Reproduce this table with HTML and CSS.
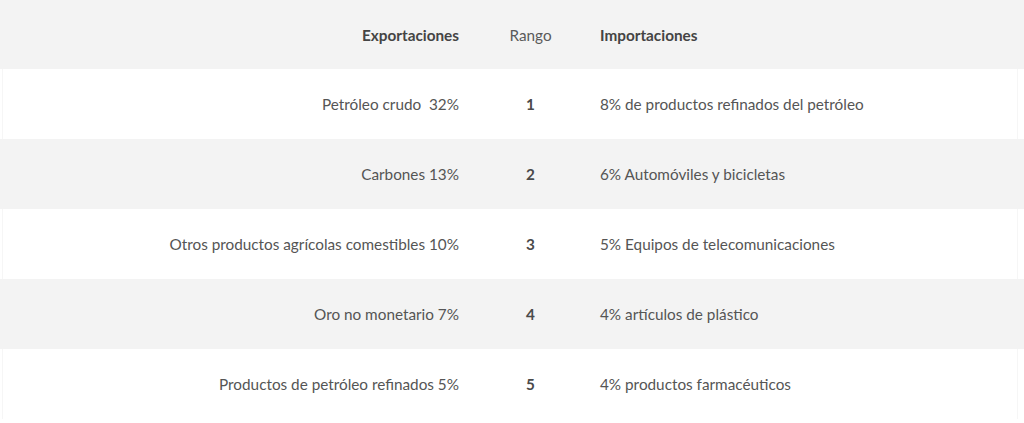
FILE: index.html
```html
<!DOCTYPE html>
<html lang="es">
<head>
<meta charset="utf-8">
<title>Comercio</title>
<link rel="stylesheet" href="styles.css">
</head>
<body>
<div class="table">
  <div class="row head">
    <div class="exp">Exportaciones</div>
    <div class="rank">Rango</div>
    <div class="imp">Importaciones</div>
  </div>
  <div class="row odd">
    <div class="exp">Petróleo crudo&nbsp; 32%</div>
    <div class="rank num">1</div>
    <div class="imp">8% de productos refinados del petróleo</div>
  </div>
  <div class="row even">
    <div class="exp">Carbones 13%</div>
    <div class="rank num">2</div>
    <div class="imp">6% Automóviles y bicicletas</div>
  </div>
  <div class="row odd">
    <div class="exp">Otros productos agrícolas comestibles 10%</div>
    <div class="rank num">3</div>
    <div class="imp">5% Equipos de telecomunicaciones</div>
  </div>
  <div class="row even">
    <div class="exp">Oro no monetario 7%</div>
    <div class="rank num">4</div>
    <div class="imp">4% artículos de plástico</div>
  </div>
  <div class="row odd">
    <div class="exp">Productos de petróleo refinados 5%</div>
    <div class="rank num">5</div>
    <div class="imp">4% productos farmacéuticos</div>
  </div>
</div>
</body>
</html>
```

FILE: styles.css
```css
html, body {
  margin: 0;
  padding: 0;
  background: #ffffff;
}
body {
  font-family: Lato, "Open Sans", Arial, sans-serif;
  font-size: 15.3px;
  color: #555555;
}
.table {
  display: flex;
  flex-direction: column;
  width: 1024px;
}
.row {
  display: grid;
  grid-template-columns: 475px 111px 1fr;
  align-items: center;
  height: 70px;
}
.row.head {
  height: 69px;
  background: #f3f3f3;
  color: #444444;
}
.row.even {
  background: #f3f3f3;
}
.row.odd {
  background:
    linear-gradient(#f6f6f6, #f6f6f6) 2px 0 / 1px 100% no-repeat,
    linear-gradient(#f6f6f6, #f6f6f6) 1017px 0 / 1px 100% no-repeat,
    #ffffff;
}
.exp {
  text-align: right;
  padding-right: 16px;
}
.rank {
  text-align: center;
}
.imp {
  padding-left: 14px;
}
.head .exp, .head .imp {
  font-weight: 700;
}
.head .rank {
  color: #5a5a5a;
}
.num {
  font-weight: 700;
  color: #4a4a4a;
}
```
